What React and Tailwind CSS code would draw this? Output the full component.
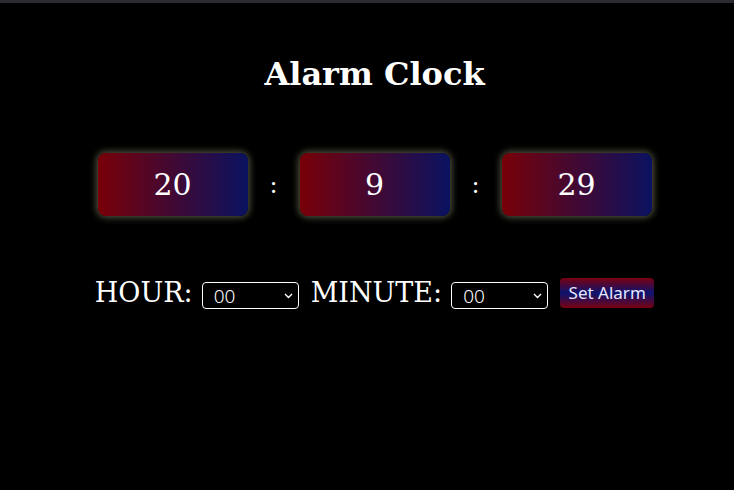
import React from "react";

function Box({ v }) {
  return (
    <div className="w-[150px] h-[63px] rounded-[8px] bg-[linear-gradient(to_right,#780008,#0a1260)] shadow-[0_0_6px_2px_rgba(220,220,170,0.35)] flex items-center justify-center text-white text-[30px] font-['DejaVu_Serif',serif]">
      {v}
    </div>
  );
}

function Sel() {
  return (
    <div className="relative w-[97px] h-[27px]">
      <select className="block appearance-none w-full h-full bg-black text-white border border-white rounded-[4px] pl-[11px] text-[19px] leading-[22px] font-['Noto_Sans',sans-serif] font-light outline-none">
        <option>00</option>
      </select>
      <svg className="absolute right-[6px] top-[11px] pointer-events-none" width="9" height="6" viewBox="0 0 9 6">
        <path d="M1 1 L4.5 4.5 L8 1" stroke="white" strokeWidth="1.4" fill="none" />
      </svg>
    </div>
  );
}

export default function App() {
  return (
    <div className="w-[734px] h-[490px] bg-black overflow-hidden font-['DejaVu_Serif',serif]">
      <div className="h-[3px] bg-[#2b2a33]" />
      <div className="pl-[15px] flex flex-col items-center">
        <h1 className="mt-[51px] text-white text-[32px] font-bold leading-[40px]">Alarm Clock</h1>
        <div className="mt-[59px] flex items-center gap-[20px]">
          <Box v="20" />
          <span className="text-white text-[24px] w-[12px] text-center">:</span>
          <Box v="9" />
          <span className="text-white text-[24px] w-[12px] text-center">:</span>
          <Box v="29" />
        </div>
        <div className="mt-[57px] flex items-center text-white text-[27px] leading-[40px]">
          <span>HOUR:</span>
          <div className="ml-[9px] mt-[5px]"><Sel /></div>
          <span className="ml-[12px]">MINUTE:</span>
          <div className="ml-[9px] mt-[5px]"><Sel /></div>
          <button className="ml-[12px] w-[94px] h-[30px] rounded-[4px] bg-[linear-gradient(to_bottom,#7a0010,#0c1470,#7a0010)] text-[#e6e6ff] text-[17px] leading-[24px] font-['Noto_Sans',sans-serif] flex items-center justify-center">
            Set Alarm
          </button>
        </div>
      </div>
    </div>
  );
}
